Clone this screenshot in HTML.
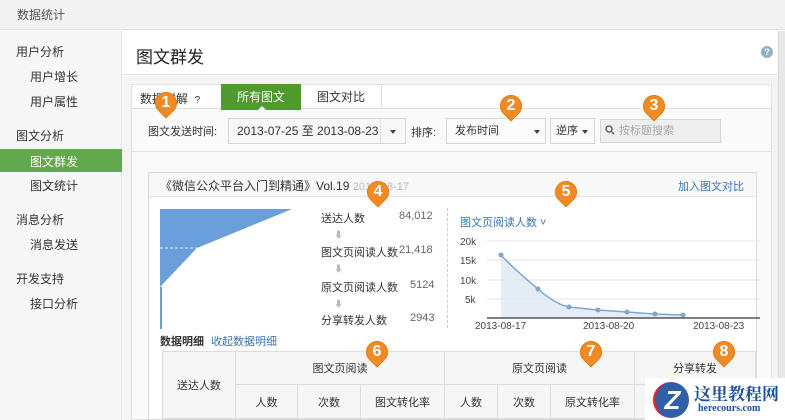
<!DOCTYPE html><html><head><meta charset="utf-8"><style>
*{margin:0;padding:0;box-sizing:border-box}
body{width:785px;height:420px;overflow:hidden;background:#fff;font-family:"Liberation Sans","Noto Sans CJK SC",sans-serif;font-size:12px;color:#333;position:relative}
.a{position:absolute;white-space:nowrap}
.pin{position:absolute;width:22px;height:22px;border-radius:50% 50% 50% 0;transform:rotate(-45deg);background:#f08a24;box-shadow:0 0 0 1px #e97a10 inset}
.pin b{position:absolute;left:0;top:0;width:22px;height:22px;transform:rotate(45deg);color:#fff;font-size:16px;font-weight:bold;text-align:center;line-height:22px}
.box{position:absolute;border:1px solid #d6d6d6;background:#f6f6f6;height:26px;line-height:24px;padding-left:8px;font-size:12px;white-space:nowrap}
.tri{position:absolute;width:0;height:0;border-left:3px solid transparent;border-right:3px solid transparent;border-top:4px solid #444}
td{border:1px solid #ddd;text-align:center;font-size:11px}
</style></head><body>
<div class="a" style="left:0;top:0;width:785px;height:30px;background:#f3f3f3;border-bottom:1px solid #e2e2e2"></div>
<div class="a" style="left:17px;top:6px;font-size:12px;color:#555">数据统计</div>
<div class="a" style="left:0;top:31px;width:122px;height:389px;background:#f7f7f7;border-right:1px solid #e2e2e2"></div>
<div class="a" style="left:16px;top:43px;font-size:12px">用户分析</div>
<div class="a" style="left:30px;top:68px">用户增长</div>
<div class="a" style="left:30px;top:93px">用户属性</div>
<div class="a" style="left:16px;top:127px">图文分析</div>
<div class="a" style="left:0;top:149px;width:122px;height:23px;background:#62a84d"></div>
<div class="a" style="left:30px;top:153px;color:#fff">图文群发</div>
<div class="a" style="left:30px;top:177px">图文统计</div>
<div class="a" style="left:16px;top:211px">消息分析</div>
<div class="a" style="left:30px;top:236px">消息发送</div>
<div class="a" style="left:16px;top:270px">开发支持</div>
<div class="a" style="left:30px;top:295px">接口分析</div>
<div class="a" style="left:123px;top:31px;width:655px;height:44px;border-bottom:1px solid #e0e0e0"></div>
<div class="a" style="left:136px;top:43px;font-size:17px;color:#222">图文群发</div>
<div class="a" style="left:761px;top:46px;width:12px;height:12px;border-radius:50%;background:#8fb0c8;color:#fff;font-size:9px;text-align:center;line-height:12px;font-weight:bold">?</div>
<div class="a" style="left:123px;top:76px;width:655px;height:344px;background:#f4f4f4"></div>
<div class="a" style="left:778px;top:31px;width:7px;height:389px;background:#e8e8e8;border-left:1px solid #d8d8d8"></div>
<div class="a" style="left:131px;top:84px;width:641px;height:336px;background:#fafafa;border:1px solid #e0e0e0"></div>
<div class="a" style="left:132px;top:85px;width:639px;height:24px;background:#fff;border-bottom:1px solid #e0e0e0"></div>
<div class="a" style="left:140px;top:90px">数据详解 &nbsp;<span style="font-size:10px">?</span></div>
<div class="a" style="left:221px;top:84px;width:80px;height:26px;background:#4f9a2e;color:#fff;text-align:center;line-height:26px">所有图文</div>
<div class="a" style="left:258px;top:106px;border-left:4px solid transparent;border-right:4px solid transparent;border-bottom:4px solid #fff;width:0;height:0"></div>
<div class="a" style="left:301px;top:85px;width:81px;height:24px;border-right:1px solid #e0e0e0;text-align:center;line-height:24px">图文对比</div>
<div class="a" style="left:148px;top:123px;font-size:11px">图文发送时间:</div>
<div class="box" style="left:228px;top:118px;width:178px;background:#f8f8f8">2013-07-25 至 2013-08-23</div>
<div class="a" style="left:380px;top:119px;width:1px;height:24px;background:#ddd"></div>
<div class="tri" style="left:390px;top:130px"></div>
<div class="a" style="left:411px;top:124px;font-size:11px">排序:</div>
<div class="box" style="left:446px;top:118px;width:100px;background:#fbfbfb;font-size:11px">发布时间</div>
<div class="tri" style="left:534px;top:130px"></div>
<div class="box" style="left:550px;top:118px;width:45px;background:#fbfbfb;font-size:11px;padding-left:5px">逆序</div>
<div class="tri" style="left:582px;top:130px"></div>
<div class="box" style="left:600px;top:119px;width:121px;height:24px;line-height:22px;background:#efefef;color:#aaa;font-size:11px;padding-left:18px">按标题搜索</div>
<svg class="a" style="left:605px;top:125px" width="10" height="10"><circle cx="4" cy="4" r="3" fill="none" stroke="#666" stroke-width="1.5"/><line x1="6" y1="6" x2="9" y2="9" stroke="#666" stroke-width="1.5"/></svg>
<div class="a" style="left:132px;top:151px;width:639px;height:1px;background:#e4e4e4"></div>
<div class="a" style="left:148px;top:172px;width:609px;height:248px;background:#fff;border:1px solid #dadada"></div>
<div class="a" style="left:149px;top:173px;width:607px;height:24px;background:#f8f8f8;border-bottom:1px solid #e4e4e4"></div>
<div class="a" style="left:160px;top:177px;font-size:12px">《微信公众平台入门到精通》Vol.19 <span style="color:#bbb;font-size:11px">2013-08-17</span></div>
<div class="a" style="left:678px;top:178px;font-size:11px;color:#3a73b3">加入图文对比</div>
<svg class="a" style="left:160px;top:209px" width="138" height="120"><path d="M0 0H132L37 39L0 78Z" fill="#6a9fdc"/><rect x="0" y="78" width="2" height="42" fill="#6a9fdc"/><line x1="0" y1="39" x2="138" y2="39" stroke="#fff" stroke-dasharray="3,2" stroke-width=".7"/></svg>
<div class="a" style="left:321px;top:210px;font-size:11px">送达人数</div><div class="a" style="left:399px;top:210px;font-size:11px;color:#666">84,012</div>
<div class="a" style="left:334px;top:228px;color:#bbb;font-size:9px">⬇</div>
<div class="a" style="left:321px;top:244px;font-size:11px">图文页阅读人数</div><div class="a" style="left:399px;top:244px;font-size:11px;color:#666">21,418</div>
<div class="a" style="left:334px;top:262px;color:#bbb;font-size:9px">⬇</div>
<div class="a" style="left:321px;top:279px;font-size:11px">原文页阅读人数</div><div class="a" style="left:410px;top:279px;font-size:11px;color:#666">5124</div>
<div class="a" style="left:334px;top:297px;color:#bbb;font-size:9px">⬇</div>
<div class="a" style="left:321px;top:312px;font-size:11px">分享转发人数</div><div class="a" style="left:410px;top:312px;font-size:11px;color:#666">2943</div>
<div class="a" style="left:447px;top:208px;height:120px;border-left:1px dashed #ccc"></div>
<div class="a" style="left:460px;top:214px;font-size:11px;color:#3a73b3">图文页阅读人数 ˅</div>
<svg class="a" style="left:455px;top:230px" width="310" height="100">
<g font-size="10" fill="#444" font-family="Liberation Sans"><text x="5" y="15">20k</text><text x="5" y="34">15k</text><text x="5" y="54">10k</text><text x="10" y="73">5k</text>
<text x="20" y="99">2013-08-17</text><text x="128" y="99">2013-08-20</text><text x="238" y="99">2013-08-23</text></g>
<g stroke="#e3e3e3"><line x1="32" y1="11" x2="305" y2="11"/><line x1="32" y1="30" x2="305" y2="30"/><line x1="32" y1="50" x2="305" y2="50"/><line x1="32" y1="69" x2="305" y2="69"/></g>
<path d="M46 25Q60 40 83 59Q100 74 114 77L143 80L172 82L200 84L228 85V88H46Z" fill="#dde8f4" opacity=".8"/>
<path d="M46 25Q60 40 83 59Q100 74 114 77L143 80L172 82L200 84L228 85" fill="none" stroke="#7fa6cf" stroke-width="1.5"/>
<g fill="#7fa6cf"><circle cx="46" cy="25" r="2.5"/><circle cx="83" cy="59" r="2.5"/><circle cx="114" cy="77" r="2.5"/><circle cx="143" cy="80" r="2.5"/><circle cx="172" cy="82" r="2.5"/><circle cx="200" cy="84" r="2.5"/><circle cx="228" cy="85" r="2.5"/></g>
<line x1="32" y1="88" x2="305" y2="88" stroke="#555" stroke-width="1.5"/></svg>
<div class="a" style="left:160px;top:333px;font-size:11px;font-weight:bold">数据明细 <span style="font-weight:normal;color:#3a73b3;margin-left:4px">收起数据明细</span></div>
<table class="a" style="left:162px;top:351px;width:593px;border-collapse:collapse;background:#f6f6f6;table-layout:fixed">
<colgroup><col style="width:73px"><col style="width:62px"><col style="width:63px"><col style="width:84px"><col style="width:53px"><col style="width:53px"><col style="width:84px"><col style="width:60px"><col style="width:61px"></colgroup>
<tr style="height:33px"><td rowspan="2">送达人数</td><td colspan="3">图文页阅读</td><td colspan="3">原文页阅读</td><td colspan="2">分享转发</td></tr>
<tr style="height:34px"><td>人数</td><td>次数</td><td>图文转化率</td><td>人数</td><td>次数</td><td>原文转化率</td><td></td><td></td></tr></table>
<div class="a" style="left:645px;top:378px;width:140px;height:42px;background:#fff"></div>
<div class="a" style="left:653px;top:382px;width:36px;height:36px;border-radius:50%;background:#2f5fa8;color:#fff;font-size:26px;font-weight:bold;text-align:center;line-height:36px;font-style:italic;border-left:3px solid #d23">Z</div>
<div class="a" style="left:694px;top:380px;font-size:17px;font-weight:bold;color:#1b4fa0;font-family:'Noto Serif CJK SC',serif">这里教程网</div>
<div class="a" style="left:698px;top:403px;font-size:10px;font-weight:bold;color:#1b4fa0;font-family:'Liberation Serif',serif">herecours.com</div>
<div class="pin" style="left:155px;top:92px"><b>1</b></div>
<div class="pin" style="left:500px;top:95px"><b>2</b></div>
<div class="pin" style="left:643px;top:95px"><b>3</b></div>
<div class="pin" style="left:367px;top:181px"><b>4</b></div>
<div class="pin" style="left:555px;top:181px"><b>5</b></div>
<div class="pin" style="left:366px;top:341px"><b>6</b></div>
<div class="pin" style="left:580px;top:341px"><b>7</b></div>
<div class="pin" style="left:713px;top:341px"><b>8</b></div>
</body></html>
